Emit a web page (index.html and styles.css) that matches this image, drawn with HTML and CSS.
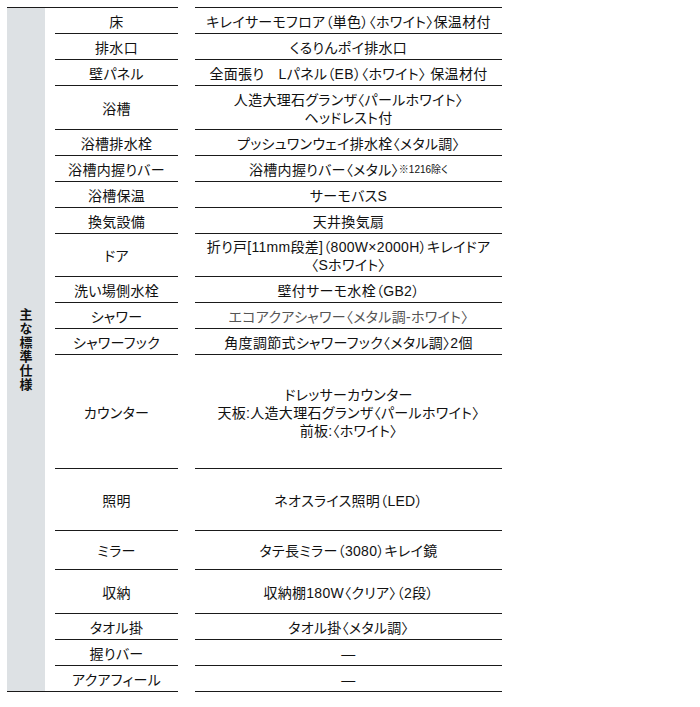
FILE: index.html
```html
<!DOCTYPE html>
<html lang="ja">
<head>
<meta charset="utf-8">
<title>主な標準仕様</title>
<link rel="stylesheet" href="styles.css">
</head>
<body>
<div class="spec">
  <div class="rule rule-left"></div>
  <div class="rule rule-right"></div>

  <div class="side"><span class="side-title">主な標準仕様</span></div>

  <div class="lab r26">床</div>
  <div class="val r26">キレイサーモフロア（単色）〈ホワイト〉保温材付</div>

  <div class="lab r26">排水口</div>
  <div class="val r26">くるりんポイ排水口</div>

  <div class="lab r26">壁パネル</div>
  <div class="val r26">全面張り　Lパネル（EB）〈ホワイト〉 保温材付</div>

  <div class="lab r44">浴槽</div>
  <div class="val r44">人造大理石グランザ〈パールホワイト〉<br>ヘッドレスト付</div>

  <div class="lab r26">浴槽排水栓</div>
  <div class="val r26">プッシュワンウェイ排水栓〈メタル調〉</div>

  <div class="lab r26">浴槽内握りバー</div>
  <div class="val r26">浴槽内握りバー〈メタル〉<small class="note">※1216除く</small></div>

  <div class="lab r26">浴槽保温</div>
  <div class="val r26">サーモバスS</div>

  <div class="lab r26">換気設備</div>
  <div class="val r26">天井換気扇</div>

  <div class="lab r43">ドア</div>
  <div class="val r43">折り戸[11mm段差]（800W×2000H）キレイドア<br>〈Sホワイト〉</div>

  <div class="lab r26">洗い場側水栓</div>
  <div class="val r26">壁付サーモ水栓（GB2）</div>

  <div class="lab r26">シャワー</div>
  <div class="val r26 muted">エコアクアシャワー〈メタル調-ホワイト〉</div>

  <div class="lab r26">シャワーフック</div>
  <div class="val r26">角度調節式シャワーフック〈メタル調〉2個</div>

  <div class="lab r114">カウンター</div>
  <div class="val r114">ドレッサーカウンター<br>天板:人造大理石グランザ〈パールホワイト〉<br>前板:〈ホワイト〉</div>

  <div class="lab r62">照明</div>
  <div class="val r62">ネオスライス照明（LED）</div>

  <div class="lab r39">ミラー</div>
  <div class="val r39">タテ長ミラー（3080）キレイ鏡</div>

  <div class="lab r44">収納</div>
  <div class="val r44">収納棚180W〈クリア〉（2段）</div>

  <div class="lab r26">タオル掛</div>
  <div class="val r26">タオル掛〈メタル調〉</div>

  <div class="lab r26">握りバー</div>
  <div class="val r26">—</div>

  <div class="lab last">アクアフィール</div>
  <div class="val last">—</div>

  <div class="rule rule-left"></div>
  <div class="rule rule-right"></div>
</div>
</body>
</html>
```

FILE: styles.css
```css
html, body {
  margin: 0;
  padding: 0;
  background: #ffffff;
}

body {
  font-family: "Liberation Sans", "Noto Sans CJK JP", sans-serif;
  font-size: 14px;
  color: #111111;
  font-feature-settings: "palt";
}

.spec {
  display: grid;
  grid-template-columns: 38px 10px 123px 17px 307px;
  margin: 7px 0 0 7px;
}

.rule {
  height: 1px;
  background: #1a1a1a;
}

.rule-left {
  grid-column: 1 / 4;
}

.rule-right {
  grid-column: 5;
}

.side {
  grid-column: 1;
  grid-row: 2 / 21;
  background: #dde1e4;
  display: flex;
  align-items: center;
  justify-content: center;
}

.side-title {
  writing-mode: vertical-rl;
  font-family: "Noto Sans CJK JP", sans-serif;
  font-weight: bold;
  font-size: 13px;
  letter-spacing: 1px;
  color: #111111;
}

.lab,
.val {
  box-sizing: border-box;
  border-bottom: 1px solid #1a1a1a;
  display: flex;
  align-items: center;
  justify-content: center;
  text-align: center;
  line-height: 18px;
  padding-top: 2px;
  letter-spacing: 0.3px;
}

.lab {
  grid-column: 3;
}

.val {
  grid-column: 5;
}

.last {
  border-bottom: none;
  height: 25px;
}

.r26 { height: 26px; }
.r39 { height: 39px; }
.r43 { height: 43px; }
.r44 { height: 44px; }
.r62 { height: 62px; }
.r114 { height: 114px; }

.muted {
  color: #555555;
}

.note {
  font-size: 10px;
  letter-spacing: 0;
}
```
